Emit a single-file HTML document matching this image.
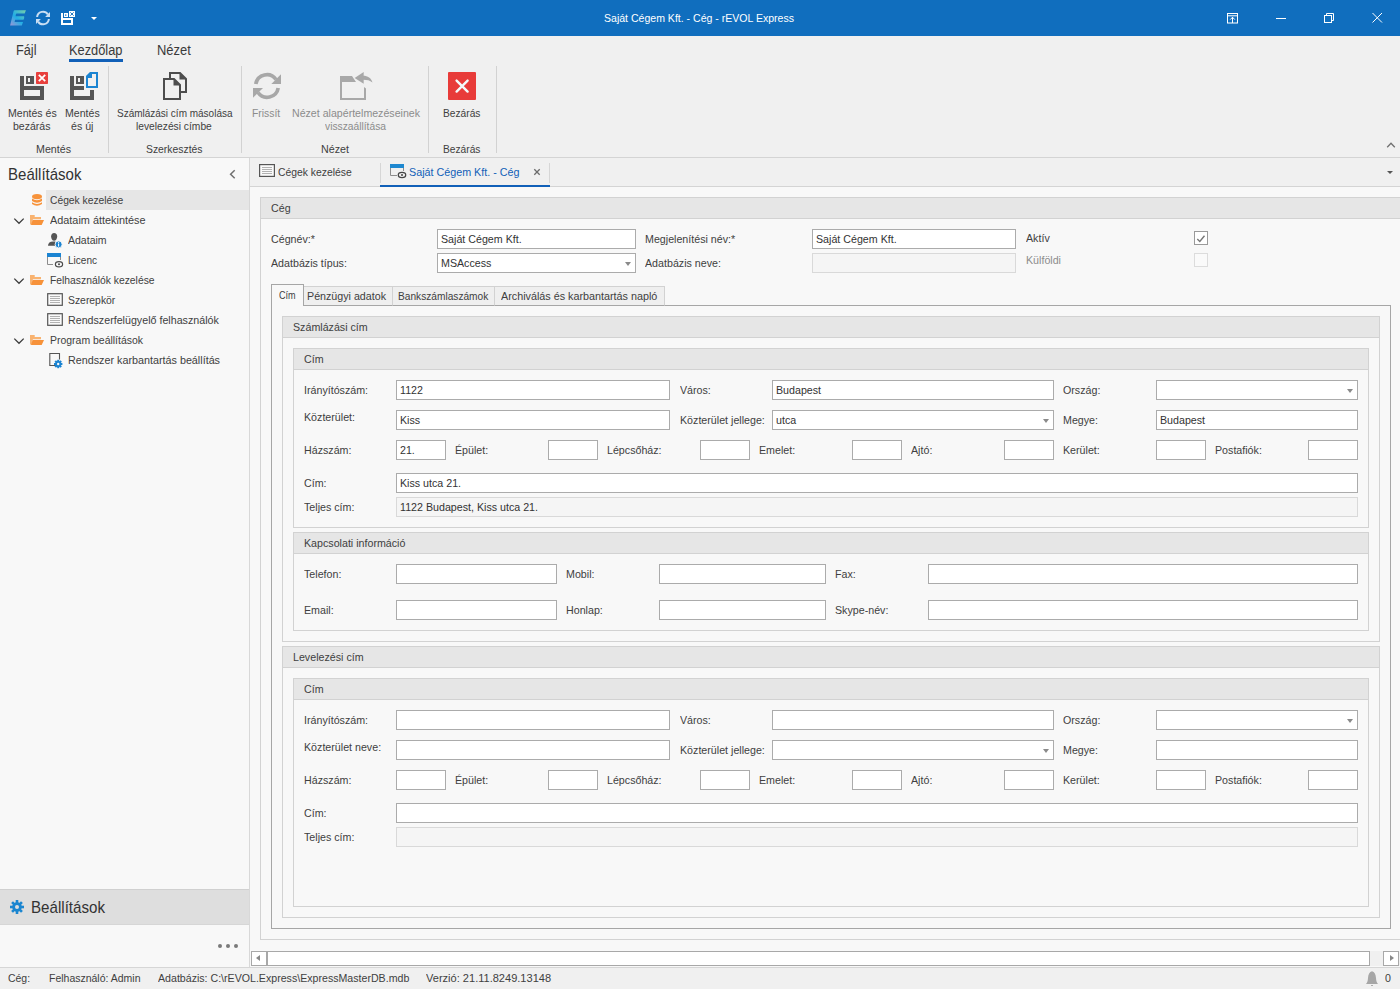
<!DOCTYPE html>
<html><head><meta charset="utf-8"><style>
html,body{margin:0;padding:0;width:1400px;height:989px;overflow:hidden;background:#f8f8f8;font-family:'Liberation Sans', sans-serif}
body>div{position:absolute}
.t{white-space:nowrap;font-family:'Liberation Sans', sans-serif}
</style></head><body>
<div style="left:0px;top:0px;width:1400px;height:36px;background:#106ebe"></div>
<div class="t" style="left:604px;top:13px;font-size:11px;line-height:11px;color:#fff;transform:scaleX(0.9582);transform-origin:0 0;">Saját Cégem Kft. - Cég - rEVOL Express</div>
<div style="left:0px;top:36px;width:1400px;height:121px;background:#f0f0f0"></div>
<div style="left:0px;top:157px;width:1400px;height:1px;background:#d4d4d4"></div>
<div class="t" style="left:16.2px;top:43px;font-size:14px;line-height:14px;color:#3a3a3a;transform:scaleX(0.9086);transform-origin:0 0;">Fájl</div>
<div class="t" style="left:69.2px;top:43px;font-size:14px;line-height:14px;color:#3a3a3a;transform:scaleX(0.9162);transform-origin:0 0;">Kezdőlap</div>
<div style="left:69px;top:59px;width:54px;height:3px;background:#1160b8"></div>
<div class="t" style="left:157px;top:43px;font-size:14px;line-height:14px;color:#3a3a3a;transform:scaleX(0.9240);transform-origin:0 0;">Nézet</div>
<div style="left:108px;top:66px;width:1px;height:87px;background:#d2d2d2"></div>
<div style="left:241px;top:66px;width:1px;height:87px;background:#d2d2d2"></div>
<div style="left:428px;top:66px;width:1px;height:87px;background:#d2d2d2"></div>
<div style="left:496px;top:66px;width:1px;height:87px;background:#d2d2d2"></div>
<div class="t" style="left:7.5px;top:108px;font-size:11px;line-height:11px;color:#404040;transform:scaleX(0.9596);transform-origin:0 0;">Mentés és</div>
<div class="t" style="left:12.5px;top:121px;font-size:11px;line-height:11px;color:#404040;transform:scaleX(0.9581);transform-origin:0 0;">bezárás</div>
<div class="t" style="left:64.5px;top:108px;font-size:11px;line-height:11px;color:#404040;transform:scaleX(0.9618);transform-origin:0 0;">Mentés</div>
<div class="t" style="left:70.5px;top:121px;font-size:11px;line-height:11px;color:#404040;transform:scaleX(0.9677);transform-origin:0 0;">és új</div>
<div class="t" style="left:116.5px;top:108px;font-size:11px;line-height:11px;color:#404040;transform:scaleX(0.9083);transform-origin:0 0;">Számlázási cím másolása</div>
<div class="t" style="left:136.2px;top:121px;font-size:11px;line-height:11px;color:#404040;transform:scaleX(0.9320);transform-origin:0 0;">levelezési címbe</div>
<div class="t" style="left:252.4px;top:108px;font-size:11px;line-height:11px;color:#8c8c8c;transform:scaleX(0.9415);transform-origin:0 0;">Frissít</div>
<div class="t" style="left:291.6px;top:108px;font-size:11px;line-height:11px;color:#8c8c8c;transform:scaleX(0.9647);transform-origin:0 0;">Nézet alapértelmezéseinek</div>
<div class="t" style="left:325px;top:121px;font-size:11px;line-height:11px;color:#8c8c8c;transform:scaleX(0.9324);transform-origin:0 0;">visszaállítása</div>
<div class="t" style="left:442.6px;top:108px;font-size:11px;line-height:11px;color:#404040;transform:scaleX(0.9267);transform-origin:0 0;">Bezárás</div>
<div class="t" style="left:35.5px;top:144px;font-size:11px;line-height:11px;color:#404040;transform:scaleX(0.9701);transform-origin:0 0;">Mentés</div>
<div class="t" style="left:145.5px;top:144px;font-size:11px;line-height:11px;color:#404040;transform:scaleX(0.9429);transform-origin:0 0;">Szerkesztés</div>
<div class="t" style="left:320.6px;top:144px;font-size:11px;line-height:11px;color:#404040;transform:scaleX(0.9739);transform-origin:0 0;">Nézet</div>
<div class="t" style="left:442.6px;top:144px;font-size:11px;line-height:11px;color:#404040;transform:scaleX(0.9267);transform-origin:0 0;">Bezárás</div>
<div style="left:0px;top:158px;width:249px;height:809px;background:#f8f8f8"></div>
<div style="left:249px;top:158px;width:1px;height:809px;background:#d8d8d8"></div>
<div class="t" style="left:8.4px;top:166px;font-size:17px;line-height:17px;color:#333;transform:scaleX(0.8837);transform-origin:0 0;">Beállítások</div>
<div style="left:46px;top:190px;width:203px;height:20px;background:#e6e6e6"></div>
<div class="t" style="left:49.6px;top:195px;font-size:11px;line-height:11px;color:#404040;transform:scaleX(0.9351);transform-origin:0 0;">Cégek kezelése</div>
<div class="t" style="left:49.6px;top:215px;font-size:11px;line-height:11px;color:#404040;transform:scaleX(0.9884);transform-origin:0 0;">Adataim áttekintése</div>
<div class="t" style="left:67.6px;top:235px;font-size:11px;line-height:11px;color:#404040;transform:scaleX(0.9564);transform-origin:0 0;">Adataim</div>
<div class="t" style="left:67.6px;top:255px;font-size:11px;line-height:11px;color:#404040;transform:scaleX(0.9152);transform-origin:0 0;">Licenc</div>
<div class="t" style="left:49.6px;top:275px;font-size:11px;line-height:11px;color:#404040;transform:scaleX(0.9398);transform-origin:0 0;">Felhasználók kezelése</div>
<div class="t" style="left:67.6px;top:295px;font-size:11px;line-height:11px;color:#404040;transform:scaleX(0.9433);transform-origin:0 0;">Szerepkör</div>
<div class="t" style="left:67.6px;top:315px;font-size:11px;line-height:11px;color:#404040;transform:scaleX(0.9708);transform-origin:0 0;">Rendszerfelügyelő felhasználók</div>
<div class="t" style="left:49.6px;top:335px;font-size:11px;line-height:11px;color:#404040;transform:scaleX(0.9506);transform-origin:0 0;">Program beállítások</div>
<div class="t" style="left:67.6px;top:355px;font-size:11px;line-height:11px;color:#404040;transform:scaleX(0.9787);transform-origin:0 0;">Rendszer karbantartás beállítás</div>
<div style="left:0px;top:889px;width:249px;height:36px;background:#dedede;border-top:1px solid #d0d0d0;border-bottom:1px solid #d6d6d6;box-sizing:border-box"></div>
<div class="t" style="left:31.4px;top:899px;font-size:17px;line-height:17px;color:#333;transform:scaleX(0.8897);transform-origin:0 0;">Beállítások</div>
<div style="left:250px;top:158px;width:1150px;height:28px;background:#f0f0f0"></div>
<div style="left:250px;top:186px;width:1150px;height:1px;background:#d4d4d4"></div>
<div class="t" style="left:277.5px;top:167px;font-size:11px;line-height:11px;color:#404040;transform:scaleX(0.9428);transform-origin:0 0;">Cégek kezelése</div>
<div style="left:380px;top:163px;width:1px;height:20px;background:#d6d6d6"></div>
<div class="t" style="left:408.5px;top:167px;font-size:11px;line-height:11px;color:#1160b8;transform:scaleX(0.9769);transform-origin:0 0;">Saját Cégem Kft. - Cég</div>
<div style="left:549px;top:163px;width:1px;height:20px;background:#d6d6d6"></div>
<div style="left:380px;top:185px;width:170px;height:2px;background:#1160b8"></div>
<div style="left:250px;top:187px;width:1150px;height:780px;background:#f8f8f8"></div>
<div style="left:260px;top:197px;width:1141px;height:743px;border:1px solid #d2d2d2;box-sizing:border-box;background:#f8f8f8;border-right:none"></div>
<div style="left:261px;top:198px;width:1140px;height:20px;background:#e6e6e6;border-bottom:1px solid #d2d2d2;box-sizing:border-box;height:21px"></div>
<div class="t" style="left:271px;top:203px;font-size:11px;line-height:11px;color:#404040;transform:scaleX(0.97);transform-origin:0 0;">Cég</div>
<div class="t" style="left:271px;top:234px;font-size:11px;line-height:11px;color:#404040;transform:scaleX(0.97);transform-origin:0 0;">Cégnév:*</div>
<div style="left:437px;top:229px;width:199px;height:20px;background:#fff;border:1px solid #ababab;box-sizing:border-box"></div>
<div class="t" style="left:441px;top:234px;font-size:11px;line-height:11px;color:#333;transform:scaleX(0.97);transform-origin:0 0;">Saját Cégem Kft.</div>
<div class="t" style="left:645px;top:234px;font-size:11px;line-height:11px;color:#404040;transform:scaleX(0.97);transform-origin:0 0;">Megjelenítési név:*</div>
<div style="left:812px;top:229px;width:204px;height:20px;background:#fff;border:1px solid #ababab;box-sizing:border-box"></div>
<div class="t" style="left:816px;top:234px;font-size:11px;line-height:11px;color:#333;transform:scaleX(0.97);transform-origin:0 0;">Saját Cégem Kft.</div>
<div class="t" style="left:1026px;top:233px;font-size:11px;line-height:11px;color:#404040;transform:scaleX(0.97);transform-origin:0 0;">Aktív</div>
<div class="t" style="left:271px;top:258px;font-size:11px;line-height:11px;color:#404040;transform:scaleX(0.97);transform-origin:0 0;">Adatbázis típus:</div>
<div style="left:437px;top:253px;width:199px;height:20px;background:#fff;border:1px solid #ababab;box-sizing:border-box"></div>
<div class="t" style="left:441px;top:258px;font-size:11px;line-height:11px;color:#333;transform:scaleX(0.97);transform-origin:0 0;">MSAccess</div>
<div style="left:625px;top:262px;width:0;height:0;border-left:3.5px solid transparent;border-right:3.5px solid transparent;border-top:4px solid #8a8a8a"></div>
<div class="t" style="left:645px;top:258px;font-size:11px;line-height:11px;color:#404040;transform:scaleX(0.97);transform-origin:0 0;">Adatbázis neve:</div>
<div style="left:812px;top:253px;width:204px;height:20px;background:#f5f5f5;border:1px solid #d9d9d9;box-sizing:border-box"></div>
<div class="t" style="left:1026px;top:255px;font-size:11px;line-height:11px;color:#8c8c8c;transform:scaleX(0.97);transform-origin:0 0;">Külföldi</div>
<div style="left:1194px;top:231px;width:14px;height:14px;background:#fff;border:1px solid #9a9a9a;box-sizing:border-box"></div>
<div style="left:1194px;top:253px;width:14px;height:14px;background:#fafafa;border:1px solid #dcdcdc;box-sizing:border-box"></div>
<div style="left:271px;top:305px;width:1120px;height:624px;border:1px solid #a6a6a6;box-sizing:border-box;background:#f8f8f8"></div>
<div style="left:303px;top:286px;width:90px;height:20px;background:#efefef;border:1px solid #d2d2d2;border-bottom:1px solid #a6a6a6;box-sizing:border-box"></div>
<div class="t" style="left:307.4px;top:291px;font-size:11px;line-height:11px;color:#404040;transform:scaleX(0.9712);transform-origin:0 0;">Pénzügyi adatok</div>
<div style="left:392px;top:286px;width:103px;height:20px;background:#efefef;border:1px solid #d2d2d2;border-bottom:1px solid #a6a6a6;box-sizing:border-box"></div>
<div class="t" style="left:398.4px;top:291px;font-size:11px;line-height:11px;color:#404040;transform:scaleX(0.9230);transform-origin:0 0;">Bankszámlaszámok</div>
<div style="left:494px;top:286px;width:171px;height:20px;background:#efefef;border:1px solid #d2d2d2;border-bottom:1px solid #a6a6a6;box-sizing:border-box"></div>
<div class="t" style="left:500.8px;top:291px;font-size:11px;line-height:11px;color:#404040;transform:scaleX(0.9794);transform-origin:0 0;">Archiválás és karbantartás napló</div>
<div style="left:271px;top:284px;width:33px;height:22px;background:#f8f8f8;border:1px solid #a6a6a6;border-bottom:none;box-sizing:border-box"></div>
<div class="t" style="left:278.8px;top:290px;font-size:11px;line-height:11px;color:#404040;transform:scaleX(0.8229);transform-origin:0 0;">Cím</div>
<div style="left:282px;top:316px;width:1098px;height:326px;border:1px solid #d2d2d2;box-sizing:border-box;background:#f8f8f8"></div>
<div style="left:283px;top:317px;width:1096px;height:20px;background:#e6e6e6;border-bottom:1px solid #d2d2d2;box-sizing:border-box;height:21px"></div>
<div class="t" style="left:293px;top:322px;font-size:11px;line-height:11px;color:#404040;transform:scaleX(0.97);transform-origin:0 0;">Számlázási cím</div>
<div style="left:293px;top:348px;width:1076px;height:180px;border:1px solid #d2d2d2;box-sizing:border-box;background:#f8f8f8"></div>
<div style="left:294px;top:349px;width:1074px;height:20px;background:#e6e6e6;border-bottom:1px solid #d2d2d2;box-sizing:border-box;height:21px"></div>
<div class="t" style="left:304px;top:354px;font-size:11px;line-height:11px;color:#404040;transform:scaleX(0.97);transform-origin:0 0;">Cím</div>
<div class="t" style="left:304px;top:385px;font-size:11px;line-height:11px;color:#404040;transform:scaleX(0.97);transform-origin:0 0;">Irányítószám:</div>
<div style="left:396px;top:380px;width:274px;height:20px;background:#fff;border:1px solid #ababab;box-sizing:border-box"></div>
<div class="t" style="left:400px;top:385px;font-size:11px;line-height:11px;color:#333;transform:scaleX(0.97);transform-origin:0 0;">1122</div>
<div class="t" style="left:680px;top:385px;font-size:11px;line-height:11px;color:#404040;transform:scaleX(0.97);transform-origin:0 0;">Város:</div>
<div style="left:772px;top:380px;width:282px;height:20px;background:#fff;border:1px solid #ababab;box-sizing:border-box"></div>
<div class="t" style="left:776px;top:385px;font-size:11px;line-height:11px;color:#333;transform:scaleX(0.97);transform-origin:0 0;">Budapest</div>
<div class="t" style="left:1063px;top:385px;font-size:11px;line-height:11px;color:#404040;transform:scaleX(0.97);transform-origin:0 0;">Ország:</div>
<div style="left:1156px;top:380px;width:202px;height:20px;background:#fff;border:1px solid #ababab;box-sizing:border-box"></div>
<div style="left:1347px;top:389px;width:0;height:0;border-left:3.5px solid transparent;border-right:3.5px solid transparent;border-top:4px solid #8a8a8a"></div>
<div class="t" style="left:304px;top:412px;font-size:11px;line-height:11px;color:#404040;transform:scaleX(0.97);transform-origin:0 0;">Közterület:</div>
<div style="left:396px;top:410px;width:274px;height:20px;background:#fff;border:1px solid #ababab;box-sizing:border-box"></div>
<div class="t" style="left:400px;top:415px;font-size:11px;line-height:11px;color:#333;transform:scaleX(0.97);transform-origin:0 0;">Kiss</div>
<div class="t" style="left:680px;top:415px;font-size:11px;line-height:11px;color:#404040;transform:scaleX(0.97);transform-origin:0 0;">Közterület jellege:</div>
<div style="left:772px;top:410px;width:282px;height:20px;background:#fff;border:1px solid #ababab;box-sizing:border-box"></div>
<div class="t" style="left:776px;top:415px;font-size:11px;line-height:11px;color:#333;transform:scaleX(0.97);transform-origin:0 0;">utca</div>
<div style="left:1043px;top:419px;width:0;height:0;border-left:3.5px solid transparent;border-right:3.5px solid transparent;border-top:4px solid #8a8a8a"></div>
<div class="t" style="left:1063px;top:415px;font-size:11px;line-height:11px;color:#404040;transform:scaleX(0.97);transform-origin:0 0;">Megye:</div>
<div style="left:1156px;top:410px;width:202px;height:20px;background:#fff;border:1px solid #ababab;box-sizing:border-box"></div>
<div class="t" style="left:1160px;top:415px;font-size:11px;line-height:11px;color:#333;transform:scaleX(0.97);transform-origin:0 0;">Budapest</div>
<div class="t" style="left:304px;top:445px;font-size:11px;line-height:11px;color:#404040;transform:scaleX(0.97);transform-origin:0 0;">Házszám:</div>
<div style="left:396px;top:440px;width:50px;height:20px;background:#fff;border:1px solid #ababab;box-sizing:border-box"></div>
<div class="t" style="left:400px;top:445px;font-size:11px;line-height:11px;color:#333;transform:scaleX(0.97);transform-origin:0 0;">21.</div>
<div class="t" style="left:455px;top:445px;font-size:11px;line-height:11px;color:#404040;transform:scaleX(0.97);transform-origin:0 0;">Épület:</div>
<div style="left:548px;top:440px;width:50px;height:20px;background:#fff;border:1px solid #ababab;box-sizing:border-box"></div>
<div class="t" style="left:607px;top:445px;font-size:11px;line-height:11px;color:#404040;transform:scaleX(0.97);transform-origin:0 0;">Lépcsőház:</div>
<div style="left:700px;top:440px;width:50px;height:20px;background:#fff;border:1px solid #ababab;box-sizing:border-box"></div>
<div class="t" style="left:759px;top:445px;font-size:11px;line-height:11px;color:#404040;transform:scaleX(0.97);transform-origin:0 0;">Emelet:</div>
<div style="left:852px;top:440px;width:50px;height:20px;background:#fff;border:1px solid #ababab;box-sizing:border-box"></div>
<div class="t" style="left:911px;top:445px;font-size:11px;line-height:11px;color:#404040;transform:scaleX(0.97);transform-origin:0 0;">Ajtó:</div>
<div style="left:1004px;top:440px;width:50px;height:20px;background:#fff;border:1px solid #ababab;box-sizing:border-box"></div>
<div class="t" style="left:1063px;top:445px;font-size:11px;line-height:11px;color:#404040;transform:scaleX(0.97);transform-origin:0 0;">Kerület:</div>
<div style="left:1156px;top:440px;width:50px;height:20px;background:#fff;border:1px solid #ababab;box-sizing:border-box"></div>
<div class="t" style="left:1215px;top:445px;font-size:11px;line-height:11px;color:#404040;transform:scaleX(0.97);transform-origin:0 0;">Postafiók:</div>
<div style="left:1308px;top:440px;width:50px;height:20px;background:#fff;border:1px solid #ababab;box-sizing:border-box"></div>
<div class="t" style="left:304px;top:478px;font-size:11px;line-height:11px;color:#404040;transform:scaleX(0.97);transform-origin:0 0;">Cím:</div>
<div style="left:396px;top:473px;width:962px;height:20px;background:#fff;border:1px solid #ababab;box-sizing:border-box"></div>
<div class="t" style="left:400px;top:478px;font-size:11px;line-height:11px;color:#333;transform:scaleX(0.97);transform-origin:0 0;">Kiss utca 21.</div>
<div class="t" style="left:304px;top:502px;font-size:11px;line-height:11px;color:#404040;transform:scaleX(0.97);transform-origin:0 0;">Teljes cím:</div>
<div style="left:396px;top:497px;width:962px;height:20px;background:#f5f5f5;border:1px solid #d9d9d9;box-sizing:border-box"></div>
<div class="t" style="left:400px;top:502px;font-size:11px;line-height:11px;color:#333;transform:scaleX(0.97);transform-origin:0 0;">1122 Budapest, Kiss utca 21.</div>
<div style="left:293px;top:532px;width:1076px;height:99px;border:1px solid #d2d2d2;box-sizing:border-box;background:#f8f8f8"></div>
<div style="left:294px;top:533px;width:1074px;height:20px;background:#e6e6e6;border-bottom:1px solid #d2d2d2;box-sizing:border-box;height:21px"></div>
<div class="t" style="left:304px;top:538px;font-size:11px;line-height:11px;color:#404040;transform:scaleX(0.97);transform-origin:0 0;">Kapcsolati információ</div>
<div class="t" style="left:304px;top:569px;font-size:11px;line-height:11px;color:#404040;transform:scaleX(0.97);transform-origin:0 0;">Telefon:</div>
<div style="left:396px;top:564px;width:161px;height:20px;background:#fff;border:1px solid #ababab;box-sizing:border-box"></div>
<div class="t" style="left:566px;top:569px;font-size:11px;line-height:11px;color:#404040;transform:scaleX(0.97);transform-origin:0 0;">Mobil:</div>
<div style="left:659px;top:564px;width:167px;height:20px;background:#fff;border:1px solid #ababab;box-sizing:border-box"></div>
<div class="t" style="left:835px;top:569px;font-size:11px;line-height:11px;color:#404040;transform:scaleX(0.97);transform-origin:0 0;">Fax:</div>
<div style="left:928px;top:564px;width:430px;height:20px;background:#fff;border:1px solid #ababab;box-sizing:border-box"></div>
<div class="t" style="left:304px;top:605px;font-size:11px;line-height:11px;color:#404040;transform:scaleX(0.97);transform-origin:0 0;">Email:</div>
<div style="left:396px;top:600px;width:161px;height:20px;background:#fff;border:1px solid #ababab;box-sizing:border-box"></div>
<div class="t" style="left:566px;top:605px;font-size:11px;line-height:11px;color:#404040;transform:scaleX(0.97);transform-origin:0 0;">Honlap:</div>
<div style="left:659px;top:600px;width:167px;height:20px;background:#fff;border:1px solid #ababab;box-sizing:border-box"></div>
<div class="t" style="left:835px;top:605px;font-size:11px;line-height:11px;color:#404040;transform:scaleX(0.97);transform-origin:0 0;">Skype-név:</div>
<div style="left:928px;top:600px;width:430px;height:20px;background:#fff;border:1px solid #ababab;box-sizing:border-box"></div>
<div style="left:282px;top:646px;width:1098px;height:272px;border:1px solid #d2d2d2;box-sizing:border-box;background:#f8f8f8"></div>
<div style="left:283px;top:647px;width:1096px;height:20px;background:#e6e6e6;border-bottom:1px solid #d2d2d2;box-sizing:border-box;height:21px"></div>
<div class="t" style="left:293px;top:652px;font-size:11px;line-height:11px;color:#404040;transform:scaleX(0.97);transform-origin:0 0;">Levelezési cím</div>
<div style="left:293px;top:678px;width:1076px;height:229px;border:1px solid #d2d2d2;box-sizing:border-box;background:#f8f8f8"></div>
<div style="left:294px;top:679px;width:1074px;height:20px;background:#e6e6e6;border-bottom:1px solid #d2d2d2;box-sizing:border-box;height:21px"></div>
<div class="t" style="left:304px;top:684px;font-size:11px;line-height:11px;color:#404040;transform:scaleX(0.97);transform-origin:0 0;">Cím</div>
<div class="t" style="left:304px;top:715px;font-size:11px;line-height:11px;color:#404040;transform:scaleX(0.97);transform-origin:0 0;">Irányítószám:</div>
<div style="left:396px;top:710px;width:274px;height:20px;background:#fff;border:1px solid #ababab;box-sizing:border-box"></div>
<div class="t" style="left:680px;top:715px;font-size:11px;line-height:11px;color:#404040;transform:scaleX(0.97);transform-origin:0 0;">Város:</div>
<div style="left:772px;top:710px;width:282px;height:20px;background:#fff;border:1px solid #ababab;box-sizing:border-box"></div>
<div class="t" style="left:1063px;top:715px;font-size:11px;line-height:11px;color:#404040;transform:scaleX(0.97);transform-origin:0 0;">Ország:</div>
<div style="left:1156px;top:710px;width:202px;height:20px;background:#fff;border:1px solid #ababab;box-sizing:border-box"></div>
<div style="left:1347px;top:719px;width:0;height:0;border-left:3.5px solid transparent;border-right:3.5px solid transparent;border-top:4px solid #8a8a8a"></div>
<div class="t" style="left:304px;top:742px;font-size:11px;line-height:11px;color:#404040;transform:scaleX(0.97);transform-origin:0 0;">Közterület neve:</div>
<div style="left:396px;top:740px;width:274px;height:20px;background:#fff;border:1px solid #ababab;box-sizing:border-box"></div>
<div class="t" style="left:680px;top:745px;font-size:11px;line-height:11px;color:#404040;transform:scaleX(0.97);transform-origin:0 0;">Közterület jellege:</div>
<div style="left:772px;top:740px;width:282px;height:20px;background:#fff;border:1px solid #ababab;box-sizing:border-box"></div>
<div style="left:1043px;top:749px;width:0;height:0;border-left:3.5px solid transparent;border-right:3.5px solid transparent;border-top:4px solid #8a8a8a"></div>
<div class="t" style="left:1063px;top:745px;font-size:11px;line-height:11px;color:#404040;transform:scaleX(0.97);transform-origin:0 0;">Megye:</div>
<div style="left:1156px;top:740px;width:202px;height:20px;background:#fff;border:1px solid #ababab;box-sizing:border-box"></div>
<div class="t" style="left:304px;top:775px;font-size:11px;line-height:11px;color:#404040;transform:scaleX(0.97);transform-origin:0 0;">Házszám:</div>
<div style="left:396px;top:770px;width:50px;height:20px;background:#fff;border:1px solid #ababab;box-sizing:border-box"></div>
<div class="t" style="left:455px;top:775px;font-size:11px;line-height:11px;color:#404040;transform:scaleX(0.97);transform-origin:0 0;">Épület:</div>
<div style="left:548px;top:770px;width:50px;height:20px;background:#fff;border:1px solid #ababab;box-sizing:border-box"></div>
<div class="t" style="left:607px;top:775px;font-size:11px;line-height:11px;color:#404040;transform:scaleX(0.97);transform-origin:0 0;">Lépcsőház:</div>
<div style="left:700px;top:770px;width:50px;height:20px;background:#fff;border:1px solid #ababab;box-sizing:border-box"></div>
<div class="t" style="left:759px;top:775px;font-size:11px;line-height:11px;color:#404040;transform:scaleX(0.97);transform-origin:0 0;">Emelet:</div>
<div style="left:852px;top:770px;width:50px;height:20px;background:#fff;border:1px solid #ababab;box-sizing:border-box"></div>
<div class="t" style="left:911px;top:775px;font-size:11px;line-height:11px;color:#404040;transform:scaleX(0.97);transform-origin:0 0;">Ajtó:</div>
<div style="left:1004px;top:770px;width:50px;height:20px;background:#fff;border:1px solid #ababab;box-sizing:border-box"></div>
<div class="t" style="left:1063px;top:775px;font-size:11px;line-height:11px;color:#404040;transform:scaleX(0.97);transform-origin:0 0;">Kerület:</div>
<div style="left:1156px;top:770px;width:50px;height:20px;background:#fff;border:1px solid #ababab;box-sizing:border-box"></div>
<div class="t" style="left:1215px;top:775px;font-size:11px;line-height:11px;color:#404040;transform:scaleX(0.97);transform-origin:0 0;">Postafiók:</div>
<div style="left:1308px;top:770px;width:50px;height:20px;background:#fff;border:1px solid #ababab;box-sizing:border-box"></div>
<div class="t" style="left:304px;top:808px;font-size:11px;line-height:11px;color:#404040;transform:scaleX(0.97);transform-origin:0 0;">Cím:</div>
<div style="left:396px;top:803px;width:962px;height:20px;background:#fff;border:1px solid #ababab;box-sizing:border-box"></div>
<div class="t" style="left:304px;top:832px;font-size:11px;line-height:11px;color:#404040;transform:scaleX(0.97);transform-origin:0 0;">Teljes cím:</div>
<div style="left:396px;top:827px;width:962px;height:20px;background:#f5f5f5;border:1px solid #d9d9d9;box-sizing:border-box"></div>
<div style="left:251px;top:951px;width:1149px;height:15px;background:#f0f0f0"></div>
<div style="left:251px;top:951px;width:1119px;height:15px;background:#fff;border:1px solid #a8a8a8;box-sizing:border-box"></div>
<div style="left:266px;top:951px;width:2px;height:15px;background:#a8a8a8"></div>
<div style="left:256px;top:955px;width:0;height:0;border-top:3.5px solid transparent;border-bottom:3.5px solid transparent;border-right:4px solid #888"></div>
<div style="left:1383px;top:951px;width:16px;height:15px;background:#fff;border:1px solid #a8a8a8;box-sizing:border-box"></div>
<div style="left:1390px;top:955px;width:0;height:0;border-top:3.5px solid transparent;border-bottom:3.5px solid transparent;border-left:4px solid #888"></div>
<div style="left:0px;top:967px;width:1400px;height:1px;background:#d6d6d6"></div>
<div style="left:0px;top:968px;width:1400px;height:21px;background:#f0f0f0"></div>
<div class="t" style="left:7.9px;top:973px;font-size:11px;line-height:11px;color:#404040;transform:scaleX(0.9505);transform-origin:0 0;">Cég:</div>
<div class="t" style="left:49.3px;top:973px;font-size:11px;line-height:11px;color:#404040;transform:scaleX(0.9531);transform-origin:0 0;">Felhasználó: Admin</div>
<div class="t" style="left:158px;top:973px;font-size:11px;line-height:11px;color:#404040;transform:scaleX(0.9649);transform-origin:0 0;">Adatbázis: C:\rEVOL.Express\ExpressMasterDB.mdb</div>
<div class="t" style="left:426px;top:973px;font-size:11px;line-height:11px;color:#404040;transform:scaleX(1.0042);transform-origin:0 0;">Verzió: 21.11.8249.13148</div>
<div class="t" style="left:1385px;top:973px;font-size:11px;line-height:11px;color:#404040;transform:scaleX(0.97);transform-origin:0 0;">0</div>

<svg width="1400" height="989" style="position:absolute;left:0;top:0">
<defs>
<linearGradient id="eg" x1="0" y1="1" x2="1" y2="0">
<stop offset="0" stop-color="#a99ad8"/><stop offset="0.45" stop-color="#23b4e8"/><stop offset="1" stop-color="#7fd8a8"/>
</linearGradient>
</defs>
<!-- title bar: E logo -->
<path d="M14.6,10.2 L25.9,10.2 L24.7,13.5 L16.8,13.5 Q16,13.6 15.8,14.5 L15.6,16.2 L24.1,16.2 Q24.6,18 23.5,19.8 L15.1,19.8 L14.6,22 L23,22 L21.8,25.4 L10.1,25.4 L13.5,11.5 Q13.8,10.2 14.6,10.2 Z" fill="url(#eg)" opacity="0.92"/>
<!-- title refresh -->
<g fill="none" stroke="#c9def3" stroke-width="2">
<path d="M37.1,17 A5.9,5.9 0 0 1 47.9,14.4"/>
<path d="M48.9,19 A5.9,5.9 0 0 1 38.1,21.6"/>
</g>
<path d="M45.1,17 L50,17 L50,12.1 Z" fill="#c9def3"/>
<path d="M36,19 L40.9,19 L36,23.9 Z" fill="#c9def3"/>
<!-- title save-close -->
<g fill="#fff">
<rect x="61" y="13" width="2" height="12"/>
<rect x="61" y="23" width="12" height="2"/>
<rect x="71" y="18" width="2" height="7"/>
<rect x="61" y="18" width="12" height="2"/>
<path d="M64,13 h4 v4 h-4 Z M65.3,14.2 v1.8 h1 v-1.8 Z" fill-rule="evenodd"/>
<rect x="69" y="11" width="6" height="6"/>
</g>
<path d="M70.3,12.3 L73.7,15.7 M73.7,12.3 L70.3,15.7" stroke="#106ebe" stroke-width="0.9"/>
<!-- title dropdown -->
<path d="M91,17 L97,17 L94,20 Z" fill="#fff"/>
<!-- window controls -->
<g fill="none" stroke="#fff" stroke-width="1">
<rect x="1227.5" y="13.5" width="10" height="9.5"/>
<path d="M1228,15.8 H1237"/>
<path d="M1232.5,17 V23 M1230.2,19.6 L1232.5,17.2 L1234.8,19.6"/>
<path d="M1276,18.5 H1286"/>
<rect x="1324.5" y="15.5" width="7" height="7"/>
<path d="M1326.5,15.5 V13.5 H1333.5 V20.5 H1331.5"/>
<path d="M1372.5,13 L1382,22.5 M1382,13 L1372.5,22.5"/>
</g>

<!-- ribbon: save & close -->
<g fill="#555">
<rect x="20" y="76" width="4" height="24"/>
<rect x="20" y="96" width="24" height="4"/>
<rect x="40" y="86" width="4" height="14"/>
<rect x="20" y="86" width="24" height="4"/>
<path d="M26,76 h8 v8 h-8 Z M28,78 v4 h2 v-4 Z" fill-rule="evenodd"/>
</g>
<rect x="36" y="72" width="12" height="12" rx="0.8" fill="#e8403d"/>
<path d="M38.8,74.8 L45.2,81.2 M45.2,74.8 L38.8,81.2" stroke="#fff" stroke-width="1.8"/>
<!-- ribbon: save & new -->
<g fill="#555">
<rect x="70" y="76" width="4" height="24"/>
<rect x="70" y="96" width="24" height="4"/>
<rect x="90" y="90" width="4" height="10"/>
<rect x="70" y="86" width="14" height="4"/>
<path d="M76,76 h8 v8 h-8 Z M78,78 v4 h2 v-4 Z" fill-rule="evenodd"/>
</g>
<path d="M87,77 V87 H97 V73 H91 Z" fill="none" stroke="#1b84d2" stroke-width="2"/>
<path d="M86,76 L90,72 L92,72 L92,78 L86,78 Z" fill="#1b84d2"/>
<!-- ribbon: copy -->
<g fill="none" stroke="#4d4d4d" stroke-width="2" stroke-linejoin="miter">
<path d="M170,78 V73 H180 L186,79 V92 H181"/>
<path d="M164,79 H174 L180,85 V99 H164 Z"/>
</g>
<path d="M179.5,73 L186,79.5 L179.5,79.5 Z" fill="#4d4d4d"/>
<path d="M173.5,79 L180,85.5 L173.5,85.5 Z" fill="#4d4d4d"/>
<!-- ribbon: refresh gray -->
<g fill="none" stroke="#a8a8a8" stroke-width="3.7">
<path d="M255.8,84 A11.2,11.2 0 0 1 276,79.5"/>
<path d="M278.2,88 A11.2,11.2 0 0 1 258,92.5"/>
</g>
<path d="M271.3,84 L281,84 L281,74.2 Z" fill="#a8a8a8"/>
<path d="M253,88 L263,88 L253,97.8 Z" fill="#a8a8a8"/>
<!-- ribbon: reset view -->
<g fill="#a8a8a8">
<path d="M340,76 L352,76 L356,82 L342,82 L342,98 L364,98 L364,87 L366,88.5 L366,100 L340,100 Z"/>
<path d="M354.6,78 L363.7,72 L363.7,83.7 Z"/>
<path d="M363,75.8 C368,75.8 371,78 372.5,82.5 C370,80.5 367,79.8 363,79.8 Z"/>
</g>
<!-- ribbon: close -->
<rect x="448" y="72" width="28" height="28" rx="1" fill="#e83b39"/>
<path d="M456.6,80.6 L467.6,91.6 M467.6,80.6 L456.6,91.6" stroke="#f2fafa" stroke-width="2.4" stroke-linecap="round"/>
<!-- ribbon collapse chevron -->
<path d="M1387.2,147.2 L1391,143.2 L1394.8,147.2" fill="none" stroke="#707070" stroke-width="1.3"/>
<!-- doc tab dropdown -->
<path d="M1387,171 L1393,171 L1390,174 Z" fill="#555"/>

<!-- nav collapse chevron -->
<path d="M234.7,170.2 L230.6,174.2 L234.7,178.2" fill="none" stroke="#707070" stroke-width="1.5"/>
<!-- nav: db icon -->
<g fill="#f7933b">
<ellipse cx="37" cy="196.6" rx="5" ry="2.6"/>
<path d="M32,198.5 Q37,202 42,198.5 V201 Q37,204.5 32,201 Z"/>
<path d="M32,202.2 Q37,205.7 42,202.2 V204 Q37,207.5 32,204 Z"/>
</g>
<!-- chevrons down -->
<g fill="none" stroke="#3c3c3c" stroke-width="1.3">
<path d="M14.3,218.6 L19,223.3 L23.7,218.6"/>
<path d="M14.3,278.6 L19,283.3 L23.7,278.6"/>
<path d="M14.3,338.6 L19,343.3 L23.7,338.6"/>
</g>
<!-- folders -->
<g id="fold">
<path d="M30,215 H34.7 V217 H41 V219.2 H33 L32,222 V224.5 H30 Z" fill="#f9b370"/>
<path d="M32.6,220 H44 L41.7,225 H31 Z" fill="#f7923a"/>
</g>
<use href="#fold" y="60"/>
<use href="#fold" y="120"/>
<!-- user info -->
<g fill="#555">
<path d="M54.1,233 C56,233 57.2,234.4 57.2,236.4 C57.2,238.6 55.8,240.8 54.1,240.8 C52.4,240.8 51.1,238.6 51.1,236.4 C51.1,234.4 52.3,233 54.1,233 Z"/>
<path d="M48,245.8 C48,242.8 50,241.4 53,241.4 L55.5,241.6 L55,245.8 Z"/>
</g>
<circle cx="58.6" cy="244.4" r="3.5" fill="#1b84d2" stroke="#f8f8f8" stroke-width="0.9"/>
<rect x="58.1" y="243.5" width="1" height="3.1" fill="#fff"/>
<circle cx="58.6" cy="242.3" r="0.6" fill="#fff"/>
<!-- license -->
<rect x="47" y="253" width="14" height="4" fill="#1b84d2"/>
<path d="M47.5,257 V264.5 H53 M60.5,257 V260" fill="none" stroke="#8c8c8c" stroke-width="1"/>
<ellipse cx="59" cy="264.2" rx="3.6" ry="2.6" fill="none" stroke="#4a4a4a" stroke-width="1.2"/>
<circle cx="59" cy="264.2" r="1" fill="#4a4a4a"/>
<!-- list icons -->
<g id="listic">
<rect x="47.7" y="293.7" width="14.6" height="11.6" fill="#fafafa" stroke="#555" stroke-width="1.2"/>
<path d="M50,296.5 H60 M50,298.5 H60 M50,300.5 H60 M50,302.5 H60" stroke="#a0a0a0" stroke-width="0.8"/>
</g>
<use href="#listic" y="20"/>
<!-- settings doc -->
<path d="M56,365.5 H49.8 V353.5 H59.5 V359.5" fill="none" stroke="#555" stroke-width="1.1"/>
<g transform="translate(58.2,364)">
<circle r="2.9" fill="#1b84d2"/>
<g fill="#1b84d2">
<rect x="-1" y="-4.2" width="2" height="8.4"/>
<rect x="-1" y="-4.2" width="2" height="8.4" transform="rotate(45)"/>
<rect x="-1" y="-4.2" width="2" height="8.4" transform="rotate(90)"/>
<rect x="-1" y="-4.2" width="2" height="8.4" transform="rotate(135)"/>
</g>
<circle r="1.2" fill="#f8f8f8"/>
</g>

<!-- bottom nav gear -->
<g transform="translate(17,907)">
<circle r="4.8" fill="#1b86d0"/>
<g fill="#1b86d0">
<rect x="-1.3" y="-7" width="2.6" height="14"/>
<rect x="-1.3" y="-7" width="2.6" height="14" transform="rotate(45)"/>
<rect x="-1.3" y="-7" width="2.6" height="14" transform="rotate(90)"/>
<rect x="-1.3" y="-7" width="2.6" height="14" transform="rotate(135)"/>
</g>
<circle r="2" fill="#dedede"/>
</g>
<!-- dots -->
<g fill="#7a7a7a"><circle cx="220" cy="946" r="2"/><circle cx="228" cy="946" r="2"/><circle cx="236" cy="946" r="2"/></g>

<!-- doc tab icons -->
<g>
<rect x="259.6" y="164.6" width="14.8" height="11.8" fill="#fafafa" stroke="#555" stroke-width="1.2"/>
<path d="M262,167.5 H272 M262,169.5 H272 M262,171.5 H272 M262,173.5 H272" stroke="#a0a0a0" stroke-width="0.8"/>
</g>
<rect x="390" y="164" width="14" height="4" fill="#1e88d0"/>
<path d="M390.5,168 V175.5 H397 M403.5,168 V171" fill="none" stroke="#8c8c8c" stroke-width="1"/>
<ellipse cx="402" cy="175" rx="3.7" ry="2.6" fill="none" stroke="#444" stroke-width="1.3"/>
<circle cx="402" cy="175" r="1" fill="#444"/>
<path d="M534.3,169.3 L539.7,174.7 M539.7,169.3 L534.3,174.7" stroke="#6b6b6b" stroke-width="1.3"/>

<!-- checkbox check -->
<path d="M1197.3,239 L1199.8,241.4 L1204.5,235.8" fill="none" stroke="#777" stroke-width="1.4"/>

<!-- bell -->
<path d="M1366,984 H1378 C1376.6,982.5 1376.2,981 1376,978 C1375.8,974 1374.5,972 1372,971.2 C1369.5,972 1368.2,974 1368,978 C1367.8,981 1367.4,982.5 1366,984 Z" fill="#a6a6a6"/>
<rect x="1371" y="985" width="2" height="0.9" fill="#a6a6a6"/>
</svg>

</body></html>
